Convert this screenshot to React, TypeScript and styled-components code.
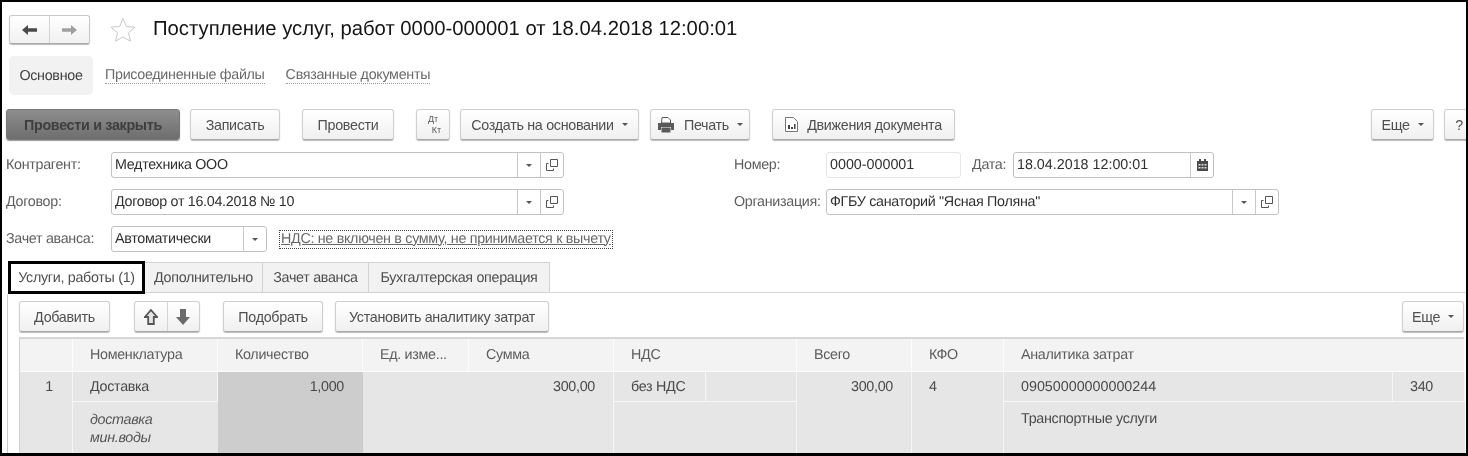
import React from 'react';
import styled, { createGlobalStyle } from 'styled-components';

const Global = createGlobalStyle`
  html, body { margin: 0; padding: 0; background: #fff; }
  body { font-family: "Liberation Sans", Arial, sans-serif; font-size: 14.3px; letter-spacing: -0.3px; text-rendering: geometricPrecision; }
`;

const Shell = styled.div`
  box-sizing: border-box;
  width: 1468px;
  height: 456px;
  border: solid #000;
  border-width: 2px 2px 3px 2px;
  overflow: hidden;
  background: #fff;
  color: #4c4c4c;
  display: flex;
  flex-direction: column;
  filter: blur(0.4px);
`;

const Header = styled.header`
  display: flex;
  align-items: center;
  height: 29px;
  margin-top: 13px;
  padding-left: 7px;
  flex: none;
`;

const NavGroup = styled.div`
  display: flex;
  width: 81px;
  height: 29px;
  box-sizing: border-box;
  border: 1px solid #c8c8c8;
  border-bottom-color: #a8a8a8;
  border-radius: 3px;
  background: linear-gradient(#fff, #f1f1f1);
  box-shadow: 0 1px 1px #bbb;
`;

const NavCell = styled.div<{ $divider?: boolean }>`
  flex: 1;
  display: flex;
  align-items: center;
  justify-content: center;
  border-left: ${p => (p.$divider ? '1px solid #d4d4d4' : 'none')};
`;

const StarSlot = styled.div`
  display: flex;
  margin: 0 17px 0 20px;
`;

const Title = styled.h1`
  margin: 0;
  font-size: 20.3px;
  font-weight: 400;
  letter-spacing: 0;
  color: #151515;
  white-space: nowrap;
`;

const SectionNav = styled.nav`
  display: flex;
  align-items: center;
  height: 39px;
  margin-top: 12px;
  padding-left: 7px;
  flex: none;
`;

const SectionActive = styled.div`
  box-sizing: border-box;
  width: 84px;
  height: 39px;
  display: flex;
  align-items: center;
  justify-content: center;
  background: #f2f2f2;
  border-radius: 5px;
  color: #404040;
  margin-right: 12px;
`;

const SectionLink = styled.a`
  color: #6a6a6a;
  border-bottom: 1px dotted #9a9a9a;
  line-height: 15px;
  margin-right: 21px;
  white-space: nowrap;
`;

const Toolbar = styled.div<{ $top: number; $left: number }>`
  display: flex;
  align-items: center;
  flex: none;
  height: 31px;
  margin-top: ${p => p.$top}px;
  padding-left: ${p => p.$left}px;
`;

const Button = styled.button<{ $w: number; $ml?: number }>`
  box-sizing: border-box;
  width: ${p => p.$w}px;
  height: 31px;
  margin: 0 0 0 ${p => p.$ml ?? 0}px;
  padding: 0;
  flex: none;
  display: flex;
  align-items: center;
  justify-content: center;
  gap: 8px;
  font: inherit;
  letter-spacing: inherit;
  color: #505050;
  border: 1px solid #cfcfcf;
  border-bottom-color: #a8a8a8;
  border-radius: 3px;
  background: linear-gradient(#fff, #f0f0f0);
  box-shadow: 0 1px 1px #bbb;
  white-space: nowrap;
`;

const PrimaryButton = styled(Button)`
  font-weight: 700;
  color: #3e3e3e;
  border-color: #777;
  background: linear-gradient(#8e8e8e, #6e6e6e);
  box-shadow: 0 1px 1px #999;
`;

const Spacer = styled.div`
  flex: 1;
`;

const DtKt = styled.span`
  display: flex;
  flex-direction: column;
  font-size: 9px;
  line-height: 11px;
  letter-spacing: 0;
  color: #555;
`;

const KtLine = styled.span`
  margin-left: 7px;
`;

const ButtonIconSlot = styled.span`
  display: flex;
  margin-right: 1px;
`;

const FieldRow = styled.div<{ $top: number }>`
  display: flex;
  align-items: center;
  flex: none;
  height: 26px;
  margin-top: ${p => p.$top}px;
  padding-left: 4px;
`;

const Label = styled.label<{ $w: number; $ml?: number }>`
  width: ${p => p.$w}px;
  margin-left: ${p => p.$ml ?? 0}px;
  flex: none;
  color: #5e5e5e;
  white-space: nowrap;
`;

const Input = styled.div<{ $w: number; $soft?: boolean }>`
  box-sizing: border-box;
  width: ${p => p.$w}px;
  height: 26px;
  flex: none;
  display: flex;
  align-items: stretch;
  border: 1px solid ${p => (p.$soft ? '#e6e6e6' : '#c2c2c2')};
  border-radius: 3px;
  background: #fff;
  color: #303030;
`;

const InputText = styled.span`
  flex: 1;
  padding-left: 3px;
  line-height: 24px;
  white-space: nowrap;
  overflow: hidden;
`;

const InputCell = styled.span`
  box-sizing: border-box;
  width: 23px;
  flex: none;
  display: flex;
  align-items: center;
  justify-content: center;
  border-left: 1px solid #c8c8c8;
`;

const Caret = styled.i`
  display: inline-block;
  width: 0;
  height: 0;
  border: solid transparent;
  border-width: 3.5px 3.5px 0 3.5px;
  border-top-color: #555;
`;

const VatLink = styled.a`
  margin-left: 13px;
  padding: 0 1px;
  height: 17px;
  line-height: 16px;
  color: #686868;
  text-decoration: underline;
  outline: 1px dotted #444;
  white-space: nowrap;
`;

const TabBar = styled.div`
  display: flex;
  align-items: flex-end;
  flex: none;
  height: 33px;
  margin-top: 9px;
  padding-left: 6px;
`;

const ActiveTab = styled.div`
  box-sizing: border-box;
  width: 137px;
  height: 33px;
  flex: none;
  display: flex;
  align-items: center;
  justify-content: center;
  border: 3px solid #000;
  background: #fff;
  color: #505050;
`;

const Tab = styled.div<{ $w: number }>`
  box-sizing: border-box;
  width: ${p => p.$w}px;
  height: 31px;
  flex: none;
  margin-bottom: 1px;
  display: flex;
  align-items: center;
  justify-content: center;
  background: #f2f2f2;
  border: 1px solid #d2d2d2;
  border-left: none;
  color: #4e4e4e;
`;

const TabLine = styled.div`
  flex: 1;
  align-self: flex-end;
  height: 1px;
  margin-bottom: 1px;
  background: #d8d8d8;
`;

const Panel = styled.section`
  flex: 1;
  margin-left: 5px;
  padding: 7px 0 0 11px;
  border-left: 1px solid #cdcdcd;
  min-height: 0;
`;

const PanelBar = styled.div`
  display: flex;
  align-items: center;
  height: 31px;
  width: 1445px;
`;

const ArrowGroup = styled.div`
  box-sizing: border-box;
  display: flex;
  width: 66px;
  height: 31px;
  margin-left: 24px;
  flex: none;
  border: 1px solid #cfcfcf;
  border-bottom-color: #a8a8a8;
  border-radius: 3px;
  background: linear-gradient(#fff, #f0f0f0);
  box-shadow: 0 1px 1px #bbb;
`;

const Table = styled.div`
  display: grid;
  grid-template-columns: 53px 145px 145px 106px 145px 92px 91px 115px 92px 389px 72px;
  grid-template-rows: 33px 30px 60px;
  width: 1445px;
  box-sizing: border-box;
  margin-top: 5px;
  border-top: 2px solid #d6d6d6;
  border-right: 1px solid #d0d0d0;
  border-left: 1px solid #d0d0d0;
  background: #e6e6e6;
`;

const HeadCell = styled.div<{ $span?: number }>`
  grid-column: span ${p => p.$span ?? 1};
  box-sizing: border-box;
  background: #f3f3f3;
  color: #5c5c5c;
  padding-left: 17px;
  line-height: 32px;
  border-right: 1px solid #fcfcfc;
  border-bottom: 1px solid #fcfcfc;
  white-space: nowrap;
`;

const Cell = styled.div<{ $col: string; $row: string; $right?: boolean; $center?: boolean; $strong?: boolean; $line?: boolean; $tall?: boolean }>`
  grid-column: ${p => p.$col};
  grid-row: ${p => p.$row};
  box-sizing: border-box;
  padding: ${p => (p.$right ? '0 18px 0 0' : p.$center ? '0 0 0 6px' : '0 0 0 17px')};
  text-align: ${p => (p.$right ? 'right' : p.$center ? 'center' : 'left')};
  background: ${p => (p.$strong ? '#cdcdcd' : '#e6e6e6')};
  color: #4a4a4a;
  line-height: ${p => (p.$tall ? 34 : 30)}px;
  border-right: 1px solid ${p => (p.$line ? '#f6f6f6' : 'transparent')};
  border-bottom: 1px solid ${p => (p.$line ? '#f6f6f6' : 'transparent')};
  white-space: nowrap;
`;

const Number = styled.span`
  letter-spacing: 0;
`;

const Note = styled.div`
  font-style: italic;
  color: #555;
  line-height: 18px;
  padding-top: 9px;
  white-space: normal;
  width: 80px;
`;

const BackArrow = ({ color }: { color: string }) => (
  <svg width="15" height="10" viewBox="0 0 15 10"><path d="M0 5 6 0v3.300h9v3.400H6V10z" fill={color} /></svg>
);
const ForwardArrow = ({ color }: { color: string }) => (
  <svg width="15" height="10" viewBox="0 0 15 10"><path d="M15 5 9 0v3.300H0v3.400h9V10z" fill={color} /></svg>
);
const Star = () => (
  <svg width="26" height="26" viewBox="0 0 26 26">
    <path d="M13 1.500l3.400 8 8.600.7-6.500 5.600 2 8.400L13 19.800l-7.500 4.400 2-8.400L1 10.200l8.600-.7z" fill="#fff" stroke="#c9c9c9" strokeWidth="1" />
  </svg>
);
const Printer = () => (
  <svg width="18" height="16" viewBox="0 0 18 16">
    <path d="M5 .500h6l2.500 2.500v3h-9z" fill="#fff" stroke="#5a5a5a" />
    <path d="M1 6h16v7h-3v-3H4v3H1z" fill="#5a5a5a" />
    <path d="M4.500 10.500h9v5h-9z" fill="#5a5a5a" />
  </svg>
);
const DocChart = () => (
  <svg width="13" height="15" viewBox="0 0 13 15">
    <path d="M.5.500h8l4 4v10H.5z" fill="#fff" stroke="#777" />
    <path d="M3 8h2v4H3zM6 10h2v2H6zM9 7h1.500v5H9z" fill="#444" />
  </svg>
);
const OpenIcon = () => (
  <svg width="12" height="12" viewBox="0 0 12 12" fill="none" stroke="#555">
    <path d="M4.500.500h7v7h-7z" />
    <path d="M2.500 4.500h-2v7h7v-2" />
  </svg>
);
const Calendar = () => (
  <svg width="11" height="12" viewBox="0 0 11 12">
    <path d="M0 2h11v10H0z" fill="#4a4a4a" />
    <path d="M2 0h2v3H2zM7 0h2v3H7z" fill="#4a4a4a" />
    <path d="M1.500 5h2v1.500h-2zM4.500 5h2v1.500h-2zM7.500 5h2v1.500h-2zM1.500 8h2v1.500h-2zM4.500 8h2v1.500h-2zM7.500 8h2v1.500h-2z" fill="#ddd" />
  </svg>
);
const UpArrow = () => (
  <svg width="14" height="16" viewBox="0 0 14 16"><path d="M7 1 13 8H9.800v7H4.200V8H1z" fill="#e4e4e4" stroke="#555" strokeWidth="1.800" /></svg>
);
const DownArrow = () => (
  <svg width="14" height="16" viewBox="0 0 14 16"><path d="M4 0h6v8h4l-7 8-7-8h4z" fill="#6a6a6a" /></svg>
);

const Select = ({ w, text }: { w: number; text: string }) => (
  <Input $w={w}>
    <InputText>{text}</InputText>
    <InputCell><Caret /></InputCell>
    <InputCell><OpenIcon /></InputCell>
  </Input>
);

export default function App() {
  return (
    <>
      <Global />
      <Shell>
        <Header>
          <NavGroup>
            <NavCell><BackArrow color="#4a4a4a" /></NavCell>
            <NavCell $divider><ForwardArrow color="#a0a0a0" /></NavCell>
          </NavGroup>
          <StarSlot><Star /></StarSlot>
          <Title>Поступление услуг, работ 0000-000001 от 18.04.2018 12:00:01</Title>
        </Header>

        <SectionNav>
          <SectionActive>Основное</SectionActive>
          <SectionLink>Присоединенные файлы</SectionLink>
          <SectionLink>Связанные документы</SectionLink>
        </SectionNav>

        <Toolbar $top={14} $left={4}>
          <PrimaryButton $w={174}>Провести и закрыть</PrimaryButton>
          <Button $w={90} $ml={10}>Записать</Button>
          <Button $w={92} $ml={22}>Провести</Button>
          <Button $w={34} $ml={22}><DtKt><span>Дт</span><KtLine>Кт</KtLine></DtKt></Button>
          <Button $w={179} $ml={10}>Создать на основании <Caret /></Button>
          <Button $w={100} $ml={11}><ButtonIconSlot><Printer /></ButtonIconSlot>Печать <Caret /></Button>
          <Button $w={183} $ml={22}><ButtonIconSlot><DocChart /></ButtonIconSlot>Движения документа</Button>
          <Button $w={63} $ml={416}>Еще <Caret /></Button>
          <Button $w={30} $ml={10}>?</Button>
        </Toolbar>

        <FieldRow $top={12}>
          <Label $w={105}>Контрагент:</Label>
          <Select w={453} text="Медтехника ООО" />
          <Label $w={92} $ml={170}>Номер:</Label>
          <Input $w={135} $soft><InputText><Number>0000-000001</Number></InputText></Input>
          <Label $w={41} $ml={11}>Дата:</Label>
          <Input $w={201}>
            <InputText><Number>18.04.2018 12:00:01</Number></InputText>
            <InputCell><Calendar /></InputCell>
          </Input>
        </FieldRow>

        <FieldRow $top={11}>
          <Label $w={105}>Договор:</Label>
          <Select w={453} text="Договор от 16.04.2018 № 10" />
          <Label $w={92} $ml={170}>Организация:</Label>
          <Select w={453} text={'ФГБУ санаторий "Ясная Поляна"'} />
        </FieldRow>

        <FieldRow $top={11}>
          <Label $w={105}>Зачет аванса:</Label>
          <Input $w={156}>
            <InputText>Автоматически</InputText>
            <InputCell><Caret /></InputCell>
          </Input>
          <VatLink>НДС: не включен в сумму, не принимается к вычету</VatLink>
        </FieldRow>

        <TabBar>
          <ActiveTab>Услуги, работы (1)</ActiveTab>
          <Tab $w={118}>Дополнительно</Tab>
          <Tab $w={106}>Зачет аванса</Tab>
          <Tab $w={181}>Бухгалтерская операция</Tab>
          <TabLine />
        </TabBar>

        <Panel>
          <PanelBar>
            <Button $w={91}>Добавить</Button>
            <ArrowGroup>
              <NavCell><UpArrow /></NavCell>
              <NavCell $divider><DownArrow /></NavCell>
            </ArrowGroup>
            <Button $w={100} $ml={23}>Подобрать</Button>
            <Button $w={214} $ml={12}>Установить аналитику затрат</Button>
            <Spacer />
            <Button $w={62}>Еще <Caret /></Button>
          </PanelBar>
          <Table>
            <HeadCell />
            <HeadCell>Номенклатура</HeadCell>
            <HeadCell>Количество</HeadCell>
            <HeadCell>Ед. изме...</HeadCell>
            <HeadCell>Сумма</HeadCell>
            <HeadCell $span={2}>НДС</HeadCell>
            <HeadCell>Всего</HeadCell>
            <HeadCell>КФО</HeadCell>
            <HeadCell $span={2}>Аналитика затрат</HeadCell>

            <Cell $col="1" $row="2 / 4" $center $line>1</Cell>
            <Cell $col="2" $row="2" $line>Доставка</Cell>
            <Cell $col="2" $row="3"><Note>доставка мин.воды</Note></Cell>
            <Cell $col="3" $row="2 / 4" $right $strong>1,000</Cell>
            <Cell $col="4" $row="2 / 4" />
            <Cell $col="5" $row="2 / 4" $right $line>300,00</Cell>
            <Cell $col="6" $row="2" $line>без НДС</Cell>
            <Cell $col="7" $row="2" $line />
            <Cell $col="6 / 8" $row="3" $line />
            <Cell $col="8" $row="2 / 4" $right $line>300,00</Cell>
            <Cell $col="9" $row="2 / 4" $line>4</Cell>
            <Cell $col="10" $row="2" $line><Number>09050000000000244</Number></Cell>
            <Cell $col="11" $row="2" $line>340</Cell>
            <Cell $col="10 / 12" $row="3" $tall>Транспортные услуги</Cell>
          </Table>
        </Panel>
      </Shell>
    </>
  );
}
